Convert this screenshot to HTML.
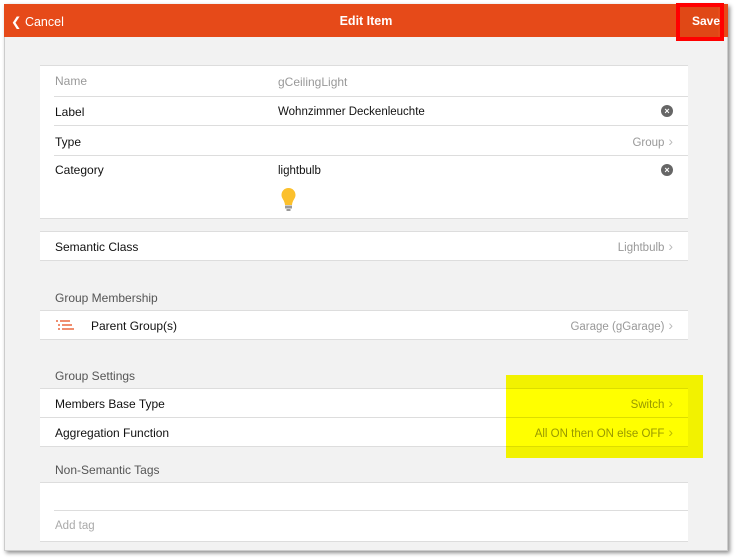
<!DOCTYPE html><html><head><style>
body{margin:0;width:735px;height:560px;background:#fff;font-family:"Liberation Sans",sans-serif;position:relative;overflow:hidden}
.frame{position:absolute;left:4px;top:4px;width:724px;height:547px;background:#f2f2f2;box-shadow:2px 2px 4px rgba(0,0,0,.45);border:1px solid #ccc;box-sizing:border-box}
.hdr{position:absolute;left:4px;top:4px;width:724px;height:33px;background:#e64a19;color:#fff;font-size:12.5px}
.a{position:absolute;left:0;width:100%;background:#fff;border-top:1px solid #ddd;border-bottom:1px solid #ddd}
.row{position:absolute;font-size:12px;color:#111}
.g{color:#999}
.ln{position:absolute;left:54px;right:47px;height:1px;background:#ddd}
.sec{position:absolute;left:55px;font-size:12px;color:#555}
.x{position:absolute;width:12px;height:12px;border-radius:6px;background:#666;color:#fff;font-size:9px;line-height:12px;text-align:center;font-weight:bold}
.r{position:absolute;right:62px;font-size:11.5px;color:#999;text-align:right}
.r:after{content:" ›";color:#bbb;font-size:14px}
</style></head><body>
<div class="frame"></div>
<div class="hdr">
<div style="position:absolute;left:7px;top:10px">❮ Cancel</div>
<div style="position:absolute;left:0;width:100%;text-align:center;top:10px;font-weight:bold">Edit Item</div>
<div style="position:absolute;left:676px;top:0;width:38px;height:33px;background:#e04816"></div>
<div style="position:absolute;left:688px;top:10px;font-weight:bold;font-size:12px">Save</div>
</div>
<div style="position:absolute;left:676px;top:3px;width:48px;height:38px;box-sizing:border-box;border:4px solid #f00"></div>
<div style="position:absolute;left:40px;width:648px;top:0;height:560px">
<div class="a" style="top:65px;height:152px"></div>
<div class="a" style="top:231px;height:28px"></div>
<div class="a" style="top:310px;height:28px"></div>
<div class="a" style="top:388px;height:57px"></div>
<div class="a" style="top:482px;height:58px"></div>
</div>
<div class="ln" style="top:96px"></div><div class="ln" style="top:125px"></div><div class="ln" style="top:155px"></div>
<div class="ln" style="top:417px;left:40px"></div><div class="ln" style="top:510px"></div>
<div class="row g" style="left:55px;top:74px">Name</div><div class="row g" style="left:278px;top:75px">gCeilingLight</div>
<div class="row" style="left:55px;top:105px">Label</div><div class="row" style="left:278px;top:106px;font-size:11.5px">Wohnzimmer Deckenleuchte</div>
<div class="x" style="left:661px;top:105px">×</div>
<div class="row" style="left:55px;top:135px">Type</div><div class="r" style="top:133px">Group</div>
<div class="row" style="left:55px;top:163px">Category</div><div class="row" style="left:278px;top:165px;font-size:11.5px">lightbulb</div>
<div class="x" style="left:661px;top:164px">×</div>
<svg style="position:absolute;left:280px;top:187px" width="17" height="26"><path d="M8.5 1C4 1 1.5 4.5 1.5 8c0 3.5 3 5 3.5 10h7c.5-5 3.5-6.5 3.5-10 0-3.5-2.5-7-7-7z" fill="#fbc02d"/><rect x="5" y="18.5" width="7" height="3" fill="#999"/><rect x="6.5" y="22" width="4" height="2" fill="#999"/></svg>
<div class="row" style="left:55px;top:240px">Semantic Class</div><div class="r" style="top:238px">Lightbulb</div>
<div class="sec" style="top:291px">Group Membership</div>
<svg style="position:absolute;left:56px;top:320px" width="18" height="12" stroke="#e64a19" stroke-width="1.3"><path d="M0 1h2M4 1h10M2 5h2M6 5h10M2 9h2M6 9h12"/></svg>
<div class="row" style="left:91px;top:319px">Parent Group(s)</div><div class="r" style="top:317px">Garage (gGarage)</div>
<div class="sec" style="top:369px">Group Settings</div>
<div class="row" style="left:55px;top:397px">Members Base Type</div><div class="r" style="top:395px">Switch</div>
<div class="row" style="left:55px;top:426px">Aggregation Function</div><div class="r" style="top:424px">All ON then ON else OFF</div>
<div class="sec" style="top:463px">Non-Semantic Tags</div>
<div class="row g" style="left:55px;top:520px;font-size:11.5px;color:#aaa">Add tag</div>
<div style="position:absolute;left:506px;top:375px;width:197px;height:83px;background:#ff0;mix-blend-mode:multiply"></div>
</body></html>
